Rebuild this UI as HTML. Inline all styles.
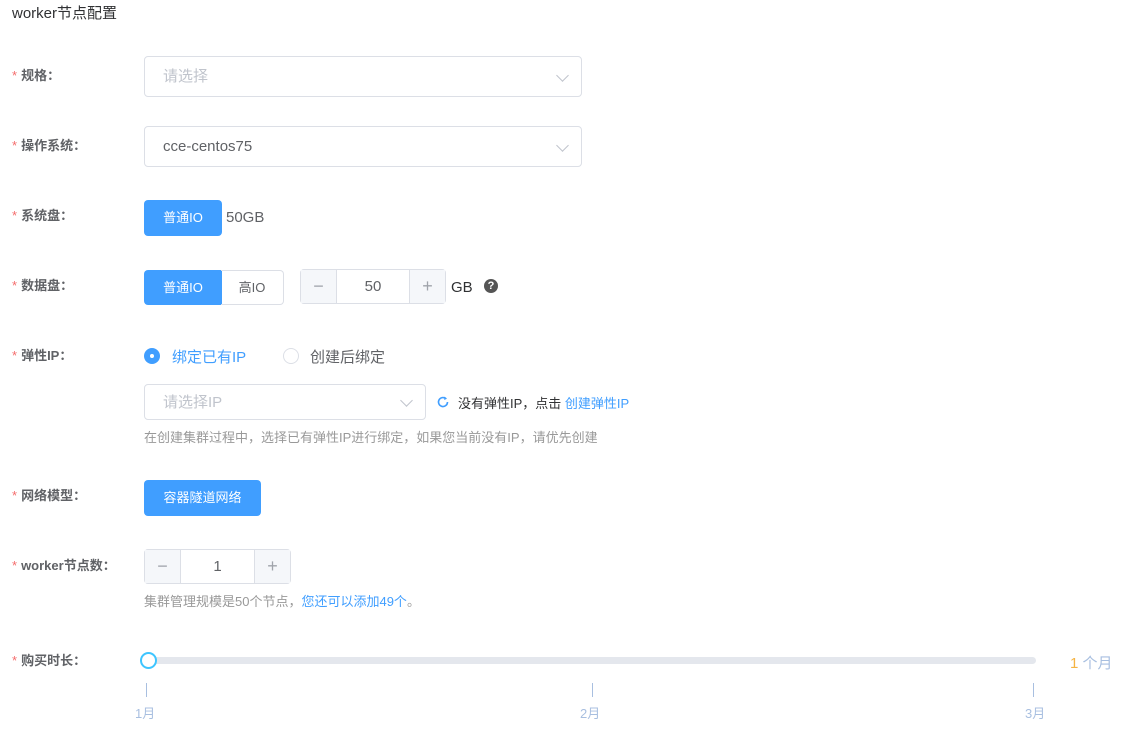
<!DOCTYPE html>
<html><head><meta charset="utf-8"><style>
*{margin:0;padding:0;box-sizing:border-box}
body{width:1123px;height:731px;background:#fff;position:relative;overflow:hidden;font-family:"Liberation Sans","Noto Sans CJK SC",sans-serif;color:#606266}
.a{position:absolute;white-space:nowrap}
.lab{position:absolute;left:12px;font-size:13px;font-weight:bold;color:#606266;line-height:20px}
.lab b{color:#f56c6c;font-weight:normal;margin-right:4px}
.sel{position:absolute;border:1px solid #dcdfe6;border-radius:4px;background:#fff;font-size:15px;line-height:40px;padding-left:18px}
.arr{position:absolute;right:14px;top:14px;width:9px;height:9px;border-right:1px solid #c0c4cc;border-bottom:1px solid #c0c4cc;transform:rotate(45deg)}
.btn{position:absolute;background:#409eff;color:#fff;font-size:13px;text-align:center;border-radius:4px}
.num{position:absolute;border:1px solid #dcdfe6;border-radius:4px;background:#fff;font-size:15px;color:#606266;text-align:center}
.num .m,.num .p{position:absolute;top:0;bottom:0;width:36px;background:#f5f7fa;color:#a0a4ab;font-size:18px;font-weight:300}
.num .m{left:0;border-right:1px solid #dcdfe6}
.num .p{right:0;border-left:1px solid #dcdfe6}
.hint{position:absolute;font-size:13px;color:#999;white-space:nowrap}
</style></head><body>
<div class="a" style="left:12px;top:2px;font-size:15px;color:#303133">worker节点配置</div>

<div class="lab" style="top:66px"><b>*</b>规格：</div>
<div class="sel" style="left:144px;top:56px;width:438px;height:41px;color:#c0c4cc">请选择<span class="arr"></span></div>

<div class="lab" style="top:136px"><b>*</b>操作系统：</div>
<div class="sel" style="left:144px;top:126px;width:438px;height:41px;color:#606266">cce-centos75<span class="arr"></span></div>

<div class="lab" style="top:206px"><b>*</b>系统盘：</div>
<div class="btn" style="left:144px;top:200px;width:78px;height:36px;line-height:36px">普通IO</div>
<div class="a" style="left:226px;top:209px;font-size:15px">50GB</div>

<div class="lab" style="top:276px"><b>*</b>数据盘：</div>
<div class="btn" style="left:144px;top:270px;width:78px;height:35px;line-height:35px;border-radius:4px 0 0 4px">普通IO</div>
<div class="a" style="left:221px;top:270px;width:63px;height:35px;border:1px solid #dcdfe6;border-left:none;border-radius:0 4px 4px 0;text-align:center;line-height:33px;font-size:13px;color:#606266">高IO</div>
<div class="num" style="left:300px;top:269px;width:146px;height:35px;line-height:33px"><span class="m">−</span>50<span class="p">+</span></div>
<div class="a" style="left:451px;top:279px;font-size:15px;color:#303133">GB</div>
<div class="a" style="left:484px;top:279px;width:14px;height:14px;border-radius:50%;background:#555;color:#fff;font-size:11px;font-weight:bold;text-align:center;line-height:14px">?</div>

<div class="lab" style="top:346px"><b>*</b>弹性IP：</div>
<div class="a" style="left:144px;top:348px;width:16px;height:16px;border-radius:50%;background:#409eff"><div style="position:absolute;left:6px;top:6px;width:4px;height:4px;background:#fff;border-radius:50%"></div></div>
<div class="a" style="left:172px;top:346px;font-size:15px;color:#409eff">绑定已有IP</div>
<div class="a" style="left:283px;top:348px;width:16px;height:16px;border-radius:50%;border:1px solid #dcdfe6"></div>
<div class="a" style="left:310px;top:346px;font-size:15px;color:#606266">创建后绑定</div>

<div class="sel" style="left:144px;top:384px;width:282px;height:36px;line-height:36px;color:#c0c4cc">请选择IP<span class="arr" style="top:11px"></span></div>
<svg class="a" style="left:436px;top:395px" width="14" height="14" viewBox="0 0 14 14"><path d="M11.5 7a4.5 4.5 0 1 1-1.6-3.4" fill="none" stroke="#409eff" stroke-width="1.6"/><path d="M8.5 1.5l2.5 2.3-2.8 1.2z" fill="#409eff"/></svg>
<div class="a" style="left:458px;top:393px;font-size:13px;color:#303133">没有弹性IP，点击 <span style="color:#409eff">创建弹性IP</span></div>
<div class="hint" style="left:144px;top:427px">在创建集群过程中，选择已有弹性IP进行绑定，如果您当前没有IP，请优先创建</div>

<div class="lab" style="top:486px"><b>*</b>网络模型：</div>
<div class="btn" style="left:144px;top:480px;width:117px;height:36px;line-height:36px">容器隧道网络</div>

<div class="lab" style="top:556px"><b>*</b>worker节点数：</div>
<div class="num" style="left:144px;top:549px;width:147px;height:35px;line-height:33px"><span class="m">−</span>1<span class="p">+</span></div>
<div class="hint" style="left:144px;top:591px">集群管理规模是50个节点，<span style="color:#409eff">您还可以添加49个</span>。</div>

<div class="lab" style="top:651px"><b>*</b>购买时长：</div>
<div class="a" style="left:148px;top:657px;width:888px;height:7px;background:#e4e7ed;border-radius:4px"></div>
<div class="a" style="left:140px;top:652px;width:17px;height:17px;border-radius:50%;border:2px solid #3ec5ff;background:#fff"></div>
<div class="a" style="left:1070px;top:652px;font-size:15px;color:#a8bfe0"><span style="color:#f5b443">1</span> 个月</div>
<div class="a" style="left:146px;top:683px;width:1px;height:14px;background:#a8bfe0"></div>
<div class="a" style="left:592px;top:683px;width:1px;height:14px;background:#a8bfe0"></div>
<div class="a" style="left:1033px;top:683px;width:1px;height:14px;background:#a8bfe0"></div>
<div class="a" style="left:135px;top:703px;font-size:13px;color:#a8bfe0">1月</div>
<div class="a" style="left:580px;top:703px;font-size:13px;color:#a8bfe0">2月</div>
<div class="a" style="left:1025px;top:703px;font-size:13px;color:#a8bfe0">3月</div>
</body></html>
